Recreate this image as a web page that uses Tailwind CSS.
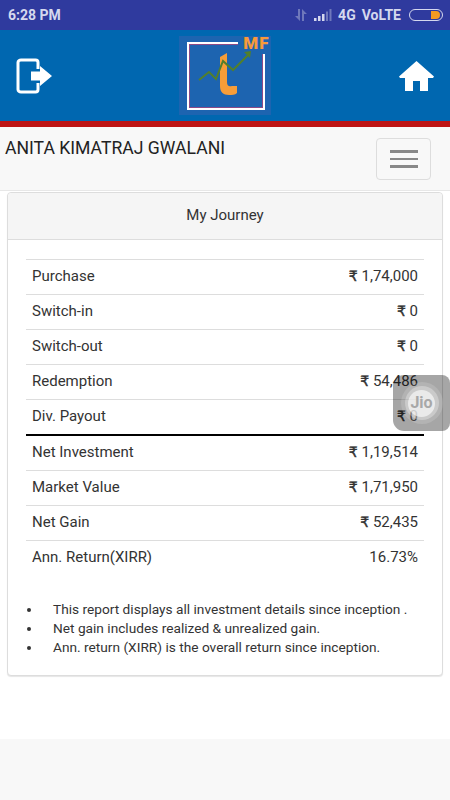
<!doctype html>
<html lang="en">
<head>
  <meta charset="utf-8">
  <title>My Journey</title>
  <script src="https://cdn.jsdelivr.net/npm/@tailwindcss/browser@4"></script>
</head>
<body class="relative h-[800px] w-[450px] overflow-hidden bg-white font-['Roboto',sans-serif] text-[#333333]">

  <!-- status bar -->
  <div class="flex h-[30px] items-center justify-between bg-[#2f3a9e] pl-[8px] pr-[7px] text-[#d5d8ee]">
    <span class="text-[14px] font-bold">6:28 PM</span>
    <div class="flex items-center">
      <svg class="mr-[7px]" width="12" height="12" viewBox="0 0 12 12" fill="#6f78bb"><path d="M3 0h2v12L0 7h3zM7 0l5 5H9v7H7z"/></svg>
      <svg class="mr-[6px]" width="18" height="12" viewBox="0 0 18 12" fill="#6f78bb"><rect x="0" y="9" width="2.500" height="3" fill="#d5d8ee"/><rect x="4" y="7" width="2.500" height="5" fill="#d5d8ee"/><rect x="8" y="5" width="2.500" height="7" fill="#d5d8ee"/><rect x="12" y="2.500" width="2" height="9.500"/><rect x="15.500" y="0" width="2" height="12"/></svg>
      <span class="mr-[6px] text-[14px] font-bold">4G</span>
      <span class="mr-[8px] text-[14px] font-bold">VoLTE</span>
      <div class="flex h-[12px] w-[34px] items-center justify-end rounded-full border border-[#d5d8ee] pr-[2px]">
        <div class="h-[8px] w-[9px] rounded-r-full bg-[#f59a23]"></div>
      </div>
    </div>
  </div>

  <!-- header -->
  <header class="flex h-[91px] items-center justify-between bg-[#0067b0] pl-[16px] pr-[16px]">
    <svg width="36" height="36" viewBox="0 0 36 36" fill="none"><path d="M22 11V4.500C22 3 21 2 19.500 2H5C3.500 2 2 3 2 4.500v27C2 33 3.500 34 5 34h14.500c1.500 0 2.500-1 2.500-2.500V25" stroke="#fff" stroke-width="3"/><path d="M15 13.500h9V8l12 10-12 10v-5.500h-9z" fill="#fff"/></svg>
    <div class="relative h-[79px] w-[92px] -translate-x-[1px] bg-[#1d64b0]">
      <div class="absolute left-[8px] top-[6px] h-[68px] w-[78px] border-[2px] border-white shadow-[inset_1px_1px_0_#8a4a88,inset_-1px_-1px_0_#8a4a88]"></div>
      <div class="absolute right-0 top-0 h-[18px] w-[33px] bg-[#1d64b0]"></div>
      <span class="absolute right-[1px] top-[-3px] text-[17px] font-black leading-[20px] tracking-[1px] text-[#f79a3a]">MF</span>
      <svg class="absolute left-0 top-0" width="92" height="79" viewBox="0 0 92 79" fill="none">
        <path d="M41 21l7-4v29c0 4 2 5 5 4h5v7c-2 2-5 2-8 2-6 0-9-3-9-9z" fill="#f79d38"/>
        <path d="M20 44l10-8 7 7 7-18 10 9 15-15" stroke="#527f2c" stroke-width="2"/>
        <path d="M65 16l7-1-1 7z" fill="#527f2c"/>
      </svg>
    </div>
    <svg width="35" height="30" viewBox="0 0 35 30" fill="#fff"><path d="M17.500 0L0 15.500l1 1.500H6v13h8V20h7v10h8V17h5l1-1.500z"/></svg>
  </header>
  <div class="h-[6px] bg-[#bd1414]"></div>

  <!-- nav -->
  <nav class="flex h-[64px] items-start justify-between border-b border-[#e7e7e7] bg-[#f8f8f8] pl-[5px] pr-[19px]">
    <span class="mt-[10px] text-[17.600px] leading-[22px] text-[#222222]">ANITA KIMATRAJ GWALANI</span>
    <button class="mt-[11px] flex h-[42px] w-[55px] flex-col items-center justify-center gap-[5px] rounded-[4px] border border-[#dddddd]">
      <span class="h-[2.500px] w-[28px] bg-[#888888]"></span>
      <span class="h-[2.500px] w-[28px] bg-[#888888]"></span>
      <span class="h-[2.500px] w-[28px] bg-[#888888]"></span>
    </button>
  </nav>

  <!-- panel -->
  <section class="mx-[7px] mt-px h-[484px] rounded-[4px] border border-[#dddddd] bg-white shadow-[0_1px_1px_rgba(0,0,0,0.1)]">
    <div class="flex h-[47px] items-center justify-center rounded-t-[4px] border-b border-[#dddddd] bg-[#f5f5f5] pb-[2px] text-[15px]">My Journey</div>
    <div class="mx-[18px] mt-[19px] w-[398px] text-[15px]">
      <div class="flex h-[35px] items-center justify-between border-t border-[#dddddd] px-[6px] pb-[2px]"><span>Purchase</span><span><b class="font-['DejaVu_Sans'] text-[14px] font-normal [-webkit-text-stroke:0.4px]">₹</b> 1,74,000</span></div>
      <div class="flex h-[35px] items-center justify-between border-t border-[#dddddd] px-[6px] pb-[2px]"><span>Switch-in</span><span><b class="font-['DejaVu_Sans'] text-[14px] font-normal [-webkit-text-stroke:0.4px]">₹</b> 0</span></div>
      <div class="flex h-[35px] items-center justify-between border-t border-[#dddddd] px-[6px] pb-[2px]"><span>Switch-out</span><span><b class="font-['DejaVu_Sans'] text-[14px] font-normal [-webkit-text-stroke:0.4px]">₹</b> 0</span></div>
      <div class="flex h-[35px] items-center justify-between border-t border-[#dddddd] px-[6px] pb-[2px]"><span>Redemption</span><span><b class="font-['DejaVu_Sans'] text-[14px] font-normal [-webkit-text-stroke:0.4px]">₹</b> 54,486</span></div>
      <div class="flex h-[35px] items-center justify-between border-t border-[#dddddd] px-[6px] pb-[2px]"><span>Div. Payout</span><span><b class="font-['DejaVu_Sans'] text-[14px] font-normal [-webkit-text-stroke:0.4px]">₹</b> 0</span></div>
      <div class="flex h-[36px] items-center justify-between border-t-[2px] border-black px-[6px] pb-[2px]"><span>Net Investment</span><span><b class="font-['DejaVu_Sans'] text-[14px] font-normal [-webkit-text-stroke:0.4px]">₹</b> 1,19,514</span></div>
      <div class="flex h-[35px] items-center justify-between border-t border-[#dddddd] px-[6px] pb-[2px]"><span>Market Value</span><span><b class="font-['DejaVu_Sans'] text-[14px] font-normal [-webkit-text-stroke:0.4px]">₹</b> 1,71,950</span></div>
      <div class="flex h-[35px] items-center justify-between border-t border-[#dddddd] px-[6px] pb-[2px]"><span>Net Gain</span><span><b class="font-['DejaVu_Sans'] text-[14px] font-normal [-webkit-text-stroke:0.4px]">₹</b> 52,435</span></div>
      <div class="flex h-[35px] items-center justify-between border-t border-[#dddddd] px-[6px] pb-[2px]"><span>Ann. Return(XIRR)</span><span>16.73%</span></div>
    </div>
    <ul class="ml-[19px] mt-[25px] text-[13.700px] leading-[19px]">
      <li class="flex items-center gap-[22px]"><span class="h-[4px] w-[4px] rounded-full bg-[#333333]"></span>This report displays all investment details since inception .</li>
      <li class="flex items-center gap-[22px]"><span class="h-[4px] w-[4px] rounded-full bg-[#333333]"></span>Net gain includes realized &amp; unrealized gain.</li>
      <li class="flex items-center gap-[22px]"><span class="h-[4px] w-[4px] rounded-full bg-[#333333]"></span>Ann. return (XIRR) is the overall return since inception.</li>
    </ul>
  </section>

  <!-- footer -->
  <div class="absolute bottom-0 left-0 h-[61px] w-full bg-[#f8f8f8]"></div>

  <!-- floating Jio button -->
  <div class="absolute left-[393px] top-[375px] flex h-[56px] w-[57px] items-center justify-center rounded-l-[11px] rounded-r-[8px] bg-black/35">
    <div class="flex h-[42px] w-[42px] items-center justify-center rounded-full bg-white/15">
      <div class="flex h-[34px] w-[34px] items-center justify-center rounded-full bg-white/30">
        <div class="flex h-[27px] w-[27px] items-center justify-center rounded-full bg-white/60">
          <span class="text-[16px] font-bold text-[#a8a8a8]">Jio</span>
        </div>
      </div>
    </div>
  </div>
</body>
</html>
